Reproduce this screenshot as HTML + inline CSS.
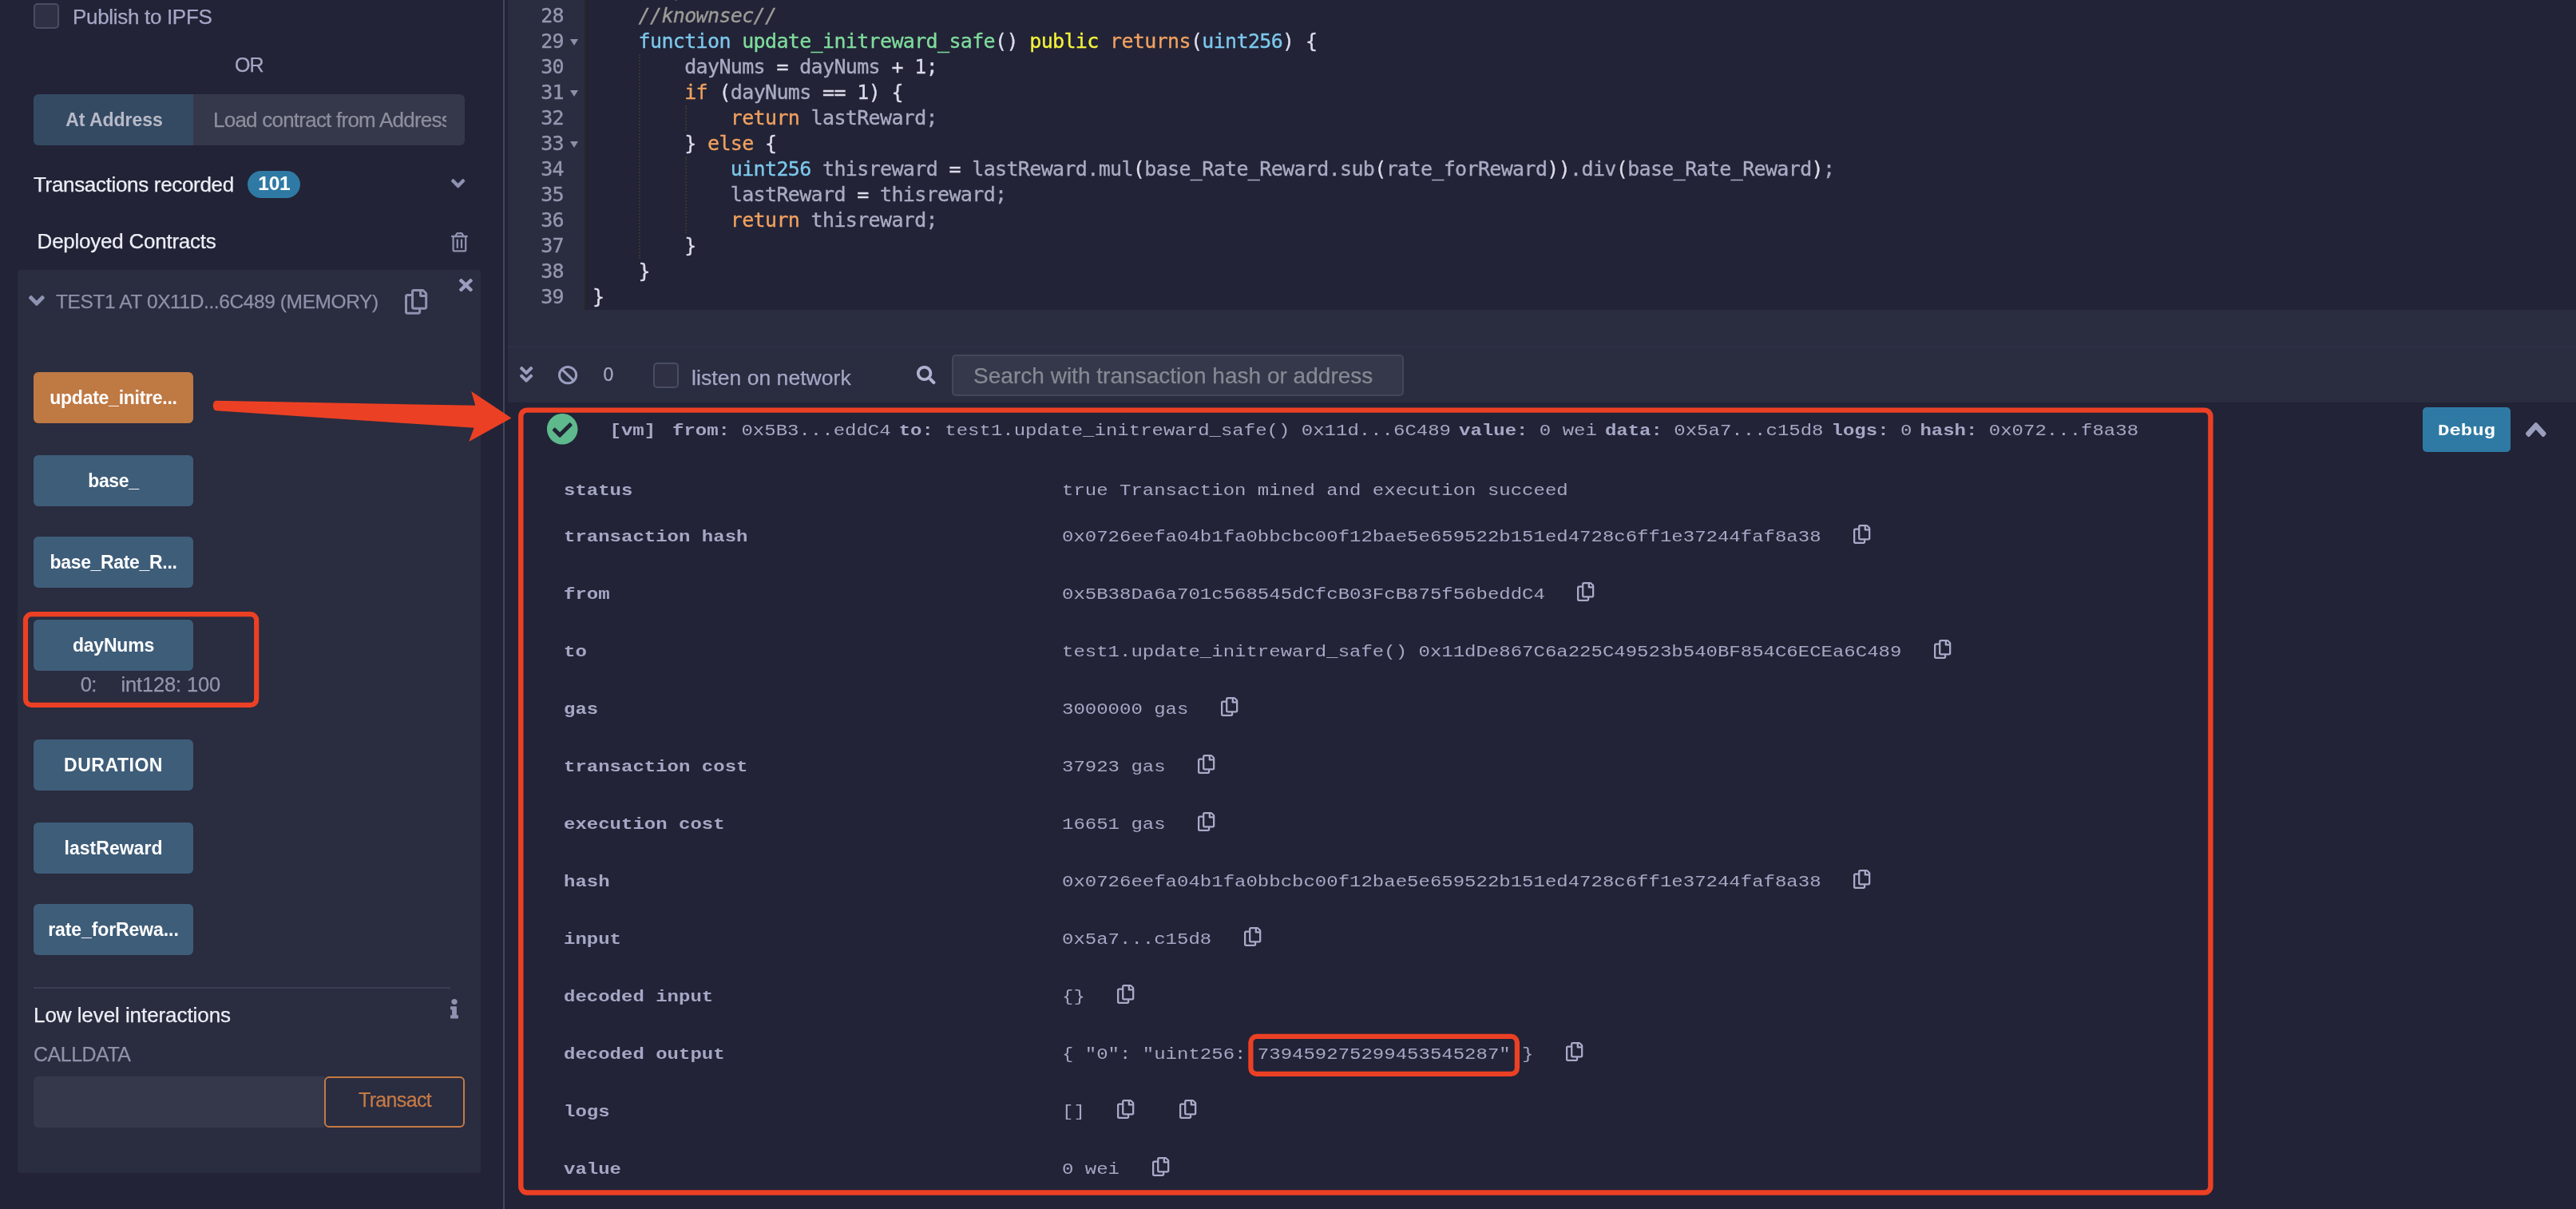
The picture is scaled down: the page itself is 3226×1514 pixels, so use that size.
<!DOCTYPE html>
<html lang="en">
<head>
<meta charset="utf-8">
<title>Remix - Ethereum IDE</title>
<style>
*{box-sizing:border-box;margin:0;padding:0}
html,body{width:3226px;height:1514px;overflow:hidden;background:#222336}
body{position:relative;font-family:"Liberation Sans",sans-serif;color:#a2a3bd}
.abs{position:absolute}
.t{position:absolute;white-space:pre;line-height:1;-webkit-text-stroke:0.25px}
/* sidebar */
#side{left:0;top:0;width:631px;height:1514px;background:#222336}
#vline{left:630px;top:0;width:2px;height:1514px;background:#43465d}
.btn{position:absolute;left:42px;width:200px;height:64px;border-radius:6px;background:#3e5d79;color:#fff;font-weight:bold;font-size:23px;text-align:center;line-height:64px;white-space:pre}
/* editor */
#editor{left:632px;top:0;width:2594px;height:388px;background:#222336}
#gutter{left:636px;top:0;width:96px;height:388px;background:#2a2c3f}
#gsep{left:732px;top:0;width:2px;height:388px;background:#26271f}
.ln{position:absolute;left:634px;width:72px;text-align:right;font:25px/32px "DejaVu Sans Mono","Liberation Mono",monospace;letter-spacing:-0.651px;-webkit-text-stroke:0.35px;color:#9597b0;white-space:pre}
.cl{position:absolute;left:742px;font:25px/32px "DejaVu Sans Mono","Liberation Mono",monospace;letter-spacing:-0.651px;-webkit-text-stroke:0.35px;color:#a9abc4;white-space:pre}
.fold{position:absolute;left:714px;width:0;height:0;border-left:5px solid transparent;border-right:5px solid transparent;border-top:8px solid #8d8fa6}
.k{color:#f0a060}.b{color:#7cc8ec}.g{color:#7fdc9c}.y{color:#f2f23a}.p{color:#dcdcea}.c{color:#9c9c98;font-style:italic}
.ig{position:absolute;width:0;border-left:2px dotted #38372f}
/* terminal */
#band{left:636px;top:388px;width:2590px;height:116px;background:#2a2c3f}
#bandline{left:636px;top:433px;width:2590px;height:3px;background:#2d3044}
#term{left:632px;top:504px;width:2594px;height:1010px;background:#222336}
.m{position:absolute;font:24px/32px "Liberation Mono",monospace;color:#a5a7c5;white-space:pre;transform:scaleY(.87);transform-origin:0 22.4px}
.m b{font-weight:bold}
.lbl{left:706px;font-weight:bold}
.val{left:1330px}
</style>
</head>
<body>
<div id="side" class="abs"></div>
<div id="editor" class="abs"></div>
<div id="gutter" class="abs"></div>
<div id="gsep" class="abs"></div>
<div id="band" class="abs"></div>
<div id="bandline" class="abs"></div>
<div id="term" class="abs"></div>
<div id="vline" class="abs"></div>
<div id="fg" style="position:absolute;left:0;top:0;width:3226px;height:1514px;will-change:transform">
<div class="abs" style="left:42px;top:4px;width:32px;height:32px;border:2px solid #4a4c63;border-radius:5px;background:#2f3044"></div>
<div class="t" style="left:91.0px;top:8.2px;font-size:26px;color:#a5a7c6;letter-spacing:-0.313px;">Publish to IPFS</div>
<div class="t" style="left:294.0px;top:68.9px;font-size:25px;color:#a5a7c6;letter-spacing:-1.000px;">OR</div>
<div class="abs" style="left:42px;top:118px;width:200px;height:64px;border-radius:6px 0 0 6px;background:#344a63"></div>
<div class="t" style="left:82.2px;top:138.8px;font-size:23px;color:#b9bac8;font-weight:bold;-webkit-text-stroke:0;letter-spacing:-0.024px;">At Address</div>
<div class="abs" style="left:242px;top:118px;width:340px;height:64px;border-radius:0 6px 6px 0;background:#35374a"></div>
<div class="abs" style="left:242px;top:118px;width:317px;height:64px;overflow:hidden"><div class="t" style="left:25.0px;top:19.3px;font-size:26px;color:#8d8f9d;letter-spacing:-0.767px;">Load contract from Address</div></div>
<div class="t" style="left:42.0px;top:218.3px;font-size:26px;color:#eceef6;letter-spacing:-0.330px;">Transactions recorded</div>
<div class="abs" style="left:310px;top:213.8px;width:66px;height:34.4px;border-radius:18px;background:#2f7aa4"></div>
<div class="t" style="left:323.3px;top:218.0px;font-size:24.5px;color:#ffffff;font-weight:bold;-webkit-text-stroke:0;letter-spacing:-0.293px;">101</div>
<svg class="abs" style="left:564.7px;top:223.7px;overflow:visible" width="17.3" height="11.4" viewBox="0 56.75 320 206.6" preserveAspectRatio="none"><path fill="#8f92b0" d="M143 256.3L7 120.3c-9.4-9.4-9.4-24.6 0-33.9l22.6-22.6c9.4-9.4 24.6-9.4 33.9 0l96.4 96.4 96.4-96.4c9.4-9.4 24.6-9.4 33.9 0L313 86.3c9.4 9.4 9.4 24.6 0 33.9l-136 136c-9.4 9.5-24.6 9.5-34 .1z"/></svg>
<div class="t" style="left:46.6px;top:289.0px;font-size:26px;color:#eceef6;letter-spacing:-0.241px;">Deployed Contracts</div>
<svg class="abs" style="left:565.2px;top:291.0px;overflow:visible" width="20.8" height="24.5" viewBox="0 -0.0 448 512" preserveAspectRatio="none"><path fill="#8f92b0" d="M268 416h24a12 12 0 0 0 12-12V188a12 12 0 0 0-12-12h-24a12 12 0 0 0-12 12v216a12 12 0 0 0 12 12zM432 80h-82.41l-34-56.7A48 48 0 0 0 274.41 0H173.59a48 48 0 0 0-41.16 23.3L98.41 80H16A16 16 0 0 0 0 96v16a16 16 0 0 0 16 16h16v336a48 48 0 0 0 48 48h288a48 48 0 0 0 48-48V128h16a16 16 0 0 0 16-16V96a16 16 0 0 0-16-16zM171.84 50.91A6 6 0 0 1 177 48h94a6 6 0 0 1 5.15 2.91L293.61 80H154.39zM368 464H80V128h288zm-212-48h24a12 12 0 0 0 12-12V188a12 12 0 0 0-12-12h-24a12 12 0 0 0-12 12v216a12 12 0 0 0 12 12z"/></svg>
<div class="abs" style="left:22px;top:337.5px;width:580px;height:1131.5px;border-radius:4px;background:#2a2c3f"></div>
<svg class="abs" style="left:574.7px;top:348.8px;overflow:visible" width="16.9" height="16.2" viewBox="0 80 352 352" preserveAspectRatio="none"><path fill="#9a9dbd" d="M242.72 256l100.07-100.07c12.28-12.28 12.28-32.19 0-44.48l-22.24-22.24c-12.28-12.28-32.19-12.28-44.48 0L176 189.28 75.93 89.21c-12.28-12.28-32.19-12.28-44.48 0L9.21 111.45c-12.28 12.28-12.28 32.19 0 44.48L109.28 256 9.21 356.07c-12.28 12.28-12.28 32.19 0 44.48l22.24 22.24c12.28 12.28 32.2 12.28 44.48 0L176 322.72l100.07 100.07c12.28 12.28 32.2 12.28 44.48 0l22.24-22.24c12.28-12.28 12.28-32.19 0-44.48L242.72 256z"/></svg>
<svg class="abs" style="left:36.4px;top:370.0px;overflow:visible" width="19.8" height="13.0" viewBox="0 56.75 320 206.6" preserveAspectRatio="none"><path fill="#8f92b0" d="M143 256.3L7 120.3c-9.4-9.4-9.4-24.6 0-33.9l22.6-22.6c9.4-9.4 24.6-9.4 33.9 0l96.4 96.4 96.4-96.4c9.4-9.4 24.6-9.4 33.9 0L313 86.3c9.4 9.4 9.4 24.6 0 33.9l-136 136c-9.4 9.5-24.6 9.5-34 .1z"/></svg>
<div class="t" style="left:70.0px;top:366.0px;font-size:24.5px;color:#8f91a9;letter-spacing:-0.400px;">TEST1 AT 0X11D...6C489 (MEMORY)</div>
<svg class="abs" style="left:506.8px;top:362.0px;overflow:visible" width="28.2" height="31.7" viewBox="0 0 448 512" preserveAspectRatio="none"><path fill="#8f92b0" d="M433.941 65.941l-51.882-51.882A48 48 0 0 0 348.118 0H176c-26.51 0-48 21.49-48 48v48H48c-26.51 0-48 21.49-48 48v320c0 26.51 21.49 48 48 48h224c26.51 0 48-21.49 48-48v-48h80c26.51 0 48-21.49 48-48V99.882a48 48 0 0 0-14.059-33.941zM266 464H54a6 6 0 0 1-6-6V150a6 6 0 0 1 6-6h74v224c0 26.51 21.49 48 48 48h96v42a6 6 0 0 1-6 6zm128-96H182a6 6 0 0 1-6-6V54a6 6 0 0 1 6-6h106v88c0 13.255 10.745 24 24 24h88v202a6 6 0 0 1-6 6zm6-256h-64V48h9.632c1.591 0 3.117.632 4.243 1.757l48.368 48.368a6 6 0 0 1 1.757 4.243V112z"/></svg>
<div class="abs" style="left:42px;top:466px;width:200px;height:64px;border-radius:6px;background:#bf7943"></div>
<div class="t" style="left:62.3px;top:487.1px;font-size:23px;color:#ffffff;font-weight:bold;-webkit-text-stroke:0;letter-spacing:-0.262px;">update_initre...</div>
<div class="abs" style="left:42px;top:570px;width:200px;height:64px;border-radius:6px;background:#3e5d79"></div>
<div class="t" style="left:110.2px;top:591.1px;font-size:23px;color:#ffffff;font-weight:bold;-webkit-text-stroke:0;letter-spacing:-0.344px;">base_</div>
<div class="abs" style="left:42px;top:672px;width:200px;height:64px;border-radius:6px;background:#3e5d79"></div>
<div class="t" style="left:62.5px;top:693.1px;font-size:23px;color:#ffffff;font-weight:bold;-webkit-text-stroke:0;letter-spacing:-0.332px;">base_Rate_R...</div>
<div class="abs" style="left:42px;top:776px;width:200px;height:64px;border-radius:6px;background:#3e5d79"></div>
<div class="t" style="left:90.9px;top:797.1px;font-size:23px;color:#ffffff;font-weight:bold;-webkit-text-stroke:0;letter-spacing:-0.191px;">dayNums</div>
<div class="abs" style="left:42px;top:926px;width:200px;height:64px;border-radius:6px;background:#3e5d79"></div>
<div class="t" style="left:80.0px;top:947.1px;font-size:23px;color:#ffffff;font-weight:bold;-webkit-text-stroke:0;letter-spacing:0.541px;">DURATION</div>
<div class="abs" style="left:42px;top:1030px;width:200px;height:64px;border-radius:6px;background:#3e5d79"></div>
<div class="t" style="left:80.5px;top:1051.1px;font-size:23px;color:#ffffff;font-weight:bold;-webkit-text-stroke:0;letter-spacing:0.028px;">lastReward</div>
<div class="abs" style="left:42px;top:1132px;width:200px;height:64px;border-radius:6px;background:#3e5d79"></div>
<div class="t" style="left:60.2px;top:1153.1px;font-size:23px;color:#ffffff;font-weight:bold;-webkit-text-stroke:0;letter-spacing:-0.093px;">rate_forRewa...</div>
<div class="t" style="left:100.7px;top:845.3px;font-size:25.5px;color:#9496ae;letter-spacing:-0.633px;">0:</div>
<div class="t" style="left:151.4px;top:845.3px;font-size:25.5px;color:#9496ae;letter-spacing:-0.145px;">int128: 100</div>
<div class="abs" style="left:42px;top:1236px;width:522px;height:2px;background:#3c3e54"></div>
<div class="t" style="left:42.0px;top:1258.3px;font-size:26px;color:#eceef6;letter-spacing:-0.072px;">Low level interactions</div>
<svg class="abs" style="left:564.0px;top:1250.5px;overflow:visible" width="10.0" height="24.5" viewBox="0 0 192 512" preserveAspectRatio="none"><path fill="#8f92b0" d="M20 424.229h20V279.771H20c-11.046 0-20-8.954-20-20V212c0-11.046 8.954-20 20-20h112c11.046 0 20 8.954 20 20v212.229h20c11.046 0 20 8.954 20 20V492c0 11.046-8.954 20-20 20H20c-11.046 0-20-8.954-20-20v-47.771c0-11.046 8.954-20 20-20zM96 0C56.235 0 24 32.235 24 72s32.235 72 72 72 72-32.235 72-72S135.764 0 96 0z"/></svg>
<div class="t" style="left:42.0px;top:1307.6px;font-size:25px;color:#8f91a9;letter-spacing:-0.501px;">CALLDATA</div>
<div class="abs" style="left:42px;top:1348px;width:364px;height:64px;border-radius:6px 0 0 6px;background:#35374a"></div>
<div class="abs" style="left:406px;top:1348px;width:176px;height:64px;border-radius:6px;border:2px solid #c47a45"></div>
<div class="t" style="left:449.0px;top:1365.3px;font-size:25px;color:#c47a45;letter-spacing:-0.666px;">Transact</div>

<div class="ln" style="top:4px">28</div>
<div class="cl" style="top:4px"><span class="c">    //knownsec//</span></div>
<div class="ln" style="top:36px">29</div>
<div class="fold" style="top:49px"></div>
<div class="cl" style="top:36px">    <span class="b">function</span> <span class="g">update_initreward_safe</span><span class="p">()</span> <span class="y">public</span> <span class="k">returns</span><span class="p">(</span><span class="b">uint256</span><span class="p">)</span> <span class="p">{</span></div>
<div class="ln" style="top:68px">30</div>
<div class="cl" style="top:68px">        dayNums <span class="p">=</span> dayNums <span class="p">+</span> <span class="p">1;</span></div>
<div class="ln" style="top:100px">31</div>
<div class="fold" style="top:113px"></div>
<div class="cl" style="top:100px">        <span class="k">if</span> <span class="p">(</span>dayNums <span class="p">==</span> <span class="p">1)</span> <span class="p">{</span></div>
<div class="ln" style="top:132px">32</div>
<div class="cl" style="top:132px">            <span class="k">return</span> lastReward;</div>
<div class="ln" style="top:164px">33</div>
<div class="fold" style="top:177px"></div>
<div class="cl" style="top:164px">        <span class="p">}</span> <span class="k">else</span> <span class="p">{</span></div>
<div class="ln" style="top:196px">34</div>
<div class="cl" style="top:196px">            <span class="b">uint256</span> thisreward <span class="p">=</span> lastReward.mul<span class="p">(</span>base_Rate_Reward.sub<span class="p">(</span>rate_forReward<span class="p">))</span>.div<span class="p">(</span>base_Rate_Reward<span class="p">)</span>;</div>
<div class="ln" style="top:228px">35</div>
<div class="cl" style="top:228px">            lastReward <span class="p">=</span> thisreward;</div>
<div class="ln" style="top:260px">36</div>
<div class="cl" style="top:260px">            <span class="k">return</span> thisreward;</div>
<div class="ln" style="top:292px">37</div>
<div class="cl" style="top:292px">        <span class="p">}</span></div>
<div class="ln" style="top:324px">38</div>
<div class="cl" style="top:324px">    <span class="p">}</span></div>
<div class="ln" style="top:356px">39</div>
<div class="cl" style="top:356px"><span class="p">}</span></div>
<div class="cl" style="top:-28px">       <span class="p">}</span></div>
<div class="ig" style="left:800px;top:68px;height:256px"></div>
<div class="ig" style="left:858px;top:132px;height:32px"></div>
<div class="ig" style="left:858px;top:196px;height:96px"></div>

<svg class="abs" style="left:651.1px;top:459.1px;overflow:visible" width="16.3" height="19.8" viewBox="-0.05 56.75 320.1 398.59" preserveAspectRatio="none"><path fill="#9a9dbd" d="M143 256.3L7 120.3c-9.4-9.4-9.4-24.6 0-33.900l22.600-22.600c9.400-9.400 24.600-9.400 33.900 0l96.400 96.400 96.400-96.400c9.400-9.400 24.600-9.400 33.900 0L313 86.300c9.400 9.400 9.400 24.600 0 33.900l-136 136c-9.400 9.500-24.600 9.500-34 .1zm34 192l136-136c9.400-9.400 9.400-24.600 0-33.900l-22.600-22.600c-9.400-9.400-24.600-9.400-33.900 0L160 352.100l-96.400-96.400c-9.400-9.400-24.600-9.400-33.900 0L7 278.300c-9.400 9.400-9.400 24.600 0 33.900l136 136c9.400 9.500 24.600 9.500 34 .1z"/></svg>
<svg class="abs" style="left:698.9px;top:457.5px;overflow:visible" width="24.2" height="23.3" viewBox="8 8 496 496" preserveAspectRatio="none"><path fill="#9a9dbd" d="M256 8C119.034 8 8 119.033 8 256s111.034 248 248 248 248-111.034 248-248S392.967 8 256 8zm130.108 117.892c65.448 65.448 70 165.481 20.677 235.637L150.47 105.216c70.204-49.356 170.226-44.735 235.638 20.676zM125.892 386.108c-65.448-65.448-70-165.481-20.677-235.637L361.53 406.784c-70.203 49.356-170.226 44.736-235.638-20.676z"/></svg>
<div class="t" style="left:755.5px;top:458.4px;font-size:23px;color:#a5a7c6;letter-spacing:0.008px;">0</div>
<div class="abs" style="left:818.4px;top:454px;width:32px;height:32px;border:2px solid #4a4c63;border-radius:5px;background:#2f3044"></div>
<div class="t" style="left:866.1px;top:459.5px;font-size:26.5px;color:#a5a7c6;letter-spacing:0.044px;">listen on network</div>
<svg class="abs" style="left:1148.0px;top:457.5px;overflow:visible" width="23.7" height="23.3" viewBox="0 0 511.96 512.05" preserveAspectRatio="none"><path fill="#b0b3d0" d="M505 442.7L405.3 343c-4.5-4.5-10.6-7-17-7H372c27.6-35.3 44-79.7 44-128C416 93.1 322.9 0 208 0S0 93.1 0 208s93.1 208 208 208c48.3 0 92.7-16.4 128-44v16.3c0 6.4 2.5 12.5 7 17l99.7 99.7c9.4 9.4 24.6 9.4 33.9 0l28.3-28.3c9.4-9.4 9.4-24.6.1-34zM208 336c-70.7 0-128-57.2-128-128 0-70.7 57.2-128 128-128 70.7 0 128 57.2 128 128 0 70.7-57.2 128-128 128z"/></svg>
<div class="abs" style="left:1192px;top:444px;width:566px;height:52px;border:2px solid #44465a;border-radius:5px;background:#35374a"></div>
<div class="t" style="left:1219.0px;top:456.5px;font-size:28px;color:#858a93;letter-spacing:0.020px;">Search with transaction hash or address</div>

<svg class="abs" style="left:684.8px;top:517.6px;overflow:visible" width="38.5" height="38.6" viewBox="8 8 496 496" preserveAspectRatio="none"><path fill="#5eb98d" d="M504 256c0 136.967-111.033 248-248 248S8 392.967 8 256 119.033 8 256 8s248 111.033 248 248zM227.314 387.314l184-184c6.248-6.248 6.248-16.379 0-22.627l-22.627-22.627c-6.248-6.249-16.379-6.249-22.628 0L216 308.118l-70.059-70.059c-6.248-6.248-16.379-6.248-22.628 0l-22.627 22.627c-6.248 6.248-6.248 16.379 0 22.627l104 104c6.249 6.249 16.379 6.249 22.628.001z"/></svg>
<div class="m" style="left:763.5px;top:523.2px;font-weight:bold">[vm]</div>
<div class="m" style="left:842px;top:523.2px"><b>from:</b> 0x5B3...eddC4<span style="letter-spacing:-4.4px"> </span><b>to:</b> test1.update_initreward_safe() 0x11d...6C489<span style="letter-spacing:-4.4px"> </span><b>value:</b> 0 wei<span style="letter-spacing:-4.4px"> </span><b>data</b><b>:</b> 0x5a7...c15d8<span style="letter-spacing:-4.4px"> </span><b>logs:</b> 0<span style="letter-spacing:-4.4px"> </span><b>hash:</b> 0x072...f8a38</div>
<div class="abs" style="left:3034px;top:510px;width:110px;height:56px;border-radius:5px;background:#2f7aa4"></div>
<div class="m" style="left:3053px;top:523.2px;font-weight:bold;color:#fff">Debug</div>
<svg class="abs" style="left:3163.0px;top:529.0px;overflow:visible" width="25.6" height="18.0" viewBox="0 56.75 320 206.6" preserveAspectRatio="none"><path fill="#9a9dbd" d="M143 256.3L7 120.3c-9.4-9.4-9.4-24.6 0-33.9l22.6-22.6c9.4-9.4 24.6-9.4 33.9 0l96.4 96.4 96.4-96.4c9.4-9.4 24.6-9.4 33.9 0L313 86.3c9.4 9.4 9.4 24.6 0 33.9l-136 136c-9.4 9.5-24.6 9.5-34 .1z" transform="translate(0,320.10) scale(1,-1)"/></svg>
<div class="m lbl" style="top:598.0px">status</div>
<div class="m val" style="top:598.0px">true Transaction mined and execution succeed</div>
<div class="m lbl" style="top:655.8px">transaction hash</div>
<div class="m val" style="top:655.8px">0x0726eefa04b1fa0bbcbc00f12bae5e659522b151ed4728c6ff1e37244faf8a38</div>
<svg class="abs" style="left:2320.9px;top:656.9px;overflow:visible" width="21.3" height="24.1" viewBox="0 0 448 512" preserveAspectRatio="none"><path fill="#a9abc9" d="M433.941 65.941l-51.882-51.882A48 48 0 0 0 348.118 0H176c-26.51 0-48 21.49-48 48v48H48c-26.51 0-48 21.49-48 48v320c0 26.51 21.49 48 48 48h224c26.51 0 48-21.49 48-48v-48h80c26.51 0 48-21.49 48-48V99.882a48 48 0 0 0-14.059-33.941zM266 464H54a6 6 0 0 1-6-6V150a6 6 0 0 1 6-6h74v224c0 26.51 21.49 48 48 48h96v42a6 6 0 0 1-6 6zm128-96H182a6 6 0 0 1-6-6V54a6 6 0 0 1 6-6h106v88c0 13.255 10.745 24 24 24h88v202a6 6 0 0 1-6 6zm6-256h-64V48h9.632c1.591 0 3.117.632 4.243 1.757l48.368 48.368a6 6 0 0 1 1.757 4.243V112z"/></svg>
<div class="m lbl" style="top:727.8px">from</div>
<div class="m val" style="top:727.8px">0x5B38Da6a701c568545dCfcB03FcB875f56beddC4</div>
<svg class="abs" style="left:1975.3px;top:728.9px;overflow:visible" width="21.3" height="24.1" viewBox="0 0 448 512" preserveAspectRatio="none"><path fill="#a9abc9" d="M433.941 65.941l-51.882-51.882A48 48 0 0 0 348.118 0H176c-26.51 0-48 21.49-48 48v48H48c-26.51 0-48 21.49-48 48v320c0 26.51 21.49 48 48 48h224c26.51 0 48-21.49 48-48v-48h80c26.51 0 48-21.49 48-48V99.882a48 48 0 0 0-14.059-33.941zM266 464H54a6 6 0 0 1-6-6V150a6 6 0 0 1 6-6h74v224c0 26.51 21.49 48 48 48h96v42a6 6 0 0 1-6 6zm128-96H182a6 6 0 0 1-6-6V54a6 6 0 0 1 6-6h106v88c0 13.255 10.745 24 24 24h88v202a6 6 0 0 1-6 6zm6-256h-64V48h9.632c1.591 0 3.117.632 4.243 1.757l48.368 48.368a6 6 0 0 1 1.757 4.243V112z"/></svg>
<div class="m lbl" style="top:799.8px">to</div>
<div class="m val" style="top:799.8px">test1.update_initreward_safe() 0x11dDe867C6a225C49523b540BF854C6ECEa6C489</div>
<svg class="abs" style="left:2421.7px;top:800.9px;overflow:visible" width="21.3" height="24.1" viewBox="0 0 448 512" preserveAspectRatio="none"><path fill="#a9abc9" d="M433.941 65.941l-51.882-51.882A48 48 0 0 0 348.118 0H176c-26.51 0-48 21.49-48 48v48H48c-26.51 0-48 21.49-48 48v320c0 26.51 21.49 48 48 48h224c26.51 0 48-21.49 48-48v-48h80c26.51 0 48-21.49 48-48V99.882a48 48 0 0 0-14.059-33.941zM266 464H54a6 6 0 0 1-6-6V150a6 6 0 0 1 6-6h74v224c0 26.51 21.49 48 48 48h96v42a6 6 0 0 1-6 6zm128-96H182a6 6 0 0 1-6-6V54a6 6 0 0 1 6-6h106v88c0 13.255 10.745 24 24 24h88v202a6 6 0 0 1-6 6zm6-256h-64V48h9.632c1.591 0 3.117.632 4.243 1.757l48.368 48.368a6 6 0 0 1 1.757 4.243V112z"/></svg>
<div class="m lbl" style="top:871.8px">gas</div>
<div class="m val" style="top:871.8px">3000000 gas</div>
<svg class="abs" style="left:1528.9px;top:872.9px;overflow:visible" width="21.3" height="24.1" viewBox="0 0 448 512" preserveAspectRatio="none"><path fill="#a9abc9" d="M433.941 65.941l-51.882-51.882A48 48 0 0 0 348.118 0H176c-26.51 0-48 21.49-48 48v48H48c-26.51 0-48 21.49-48 48v320c0 26.51 21.49 48 48 48h224c26.51 0 48-21.49 48-48v-48h80c26.51 0 48-21.49 48-48V99.882a48 48 0 0 0-14.059-33.941zM266 464H54a6 6 0 0 1-6-6V150a6 6 0 0 1 6-6h74v224c0 26.51 21.49 48 48 48h96v42a6 6 0 0 1-6 6zm128-96H182a6 6 0 0 1-6-6V54a6 6 0 0 1 6-6h106v88c0 13.255 10.745 24 24 24h88v202a6 6 0 0 1-6 6zm6-256h-64V48h9.632c1.591 0 3.117.632 4.243 1.757l48.368 48.368a6 6 0 0 1 1.757 4.243V112z"/></svg>
<div class="m lbl" style="top:943.8px">transaction cost</div>
<div class="m val" style="top:943.8px">37923 gas</div>
<svg class="abs" style="left:1500.1px;top:944.9px;overflow:visible" width="21.3" height="24.1" viewBox="0 0 448 512" preserveAspectRatio="none"><path fill="#a9abc9" d="M433.941 65.941l-51.882-51.882A48 48 0 0 0 348.118 0H176c-26.51 0-48 21.49-48 48v48H48c-26.51 0-48 21.49-48 48v320c0 26.51 21.49 48 48 48h224c26.51 0 48-21.49 48-48v-48h80c26.51 0 48-21.49 48-48V99.882a48 48 0 0 0-14.059-33.941zM266 464H54a6 6 0 0 1-6-6V150a6 6 0 0 1 6-6h74v224c0 26.51 21.49 48 48 48h96v42a6 6 0 0 1-6 6zm128-96H182a6 6 0 0 1-6-6V54a6 6 0 0 1 6-6h106v88c0 13.255 10.745 24 24 24h88v202a6 6 0 0 1-6 6zm6-256h-64V48h9.632c1.591 0 3.117.632 4.243 1.757l48.368 48.368a6 6 0 0 1 1.757 4.243V112z"/></svg>
<div class="m lbl" style="top:1015.8px">execution cost</div>
<div class="m val" style="top:1015.8px">16651 gas</div>
<svg class="abs" style="left:1500.1px;top:1016.9px;overflow:visible" width="21.3" height="24.1" viewBox="0 0 448 512" preserveAspectRatio="none"><path fill="#a9abc9" d="M433.941 65.941l-51.882-51.882A48 48 0 0 0 348.118 0H176c-26.51 0-48 21.49-48 48v48H48c-26.51 0-48 21.49-48 48v320c0 26.51 21.49 48 48 48h224c26.51 0 48-21.49 48-48v-48h80c26.51 0 48-21.49 48-48V99.882a48 48 0 0 0-14.059-33.941zM266 464H54a6 6 0 0 1-6-6V150a6 6 0 0 1 6-6h74v224c0 26.51 21.49 48 48 48h96v42a6 6 0 0 1-6 6zm128-96H182a6 6 0 0 1-6-6V54a6 6 0 0 1 6-6h106v88c0 13.255 10.745 24 24 24h88v202a6 6 0 0 1-6 6zm6-256h-64V48h9.632c1.591 0 3.117.632 4.243 1.757l48.368 48.368a6 6 0 0 1 1.757 4.243V112z"/></svg>
<div class="m lbl" style="top:1087.8px">hash</div>
<div class="m val" style="top:1087.8px">0x0726eefa04b1fa0bbcbc00f12bae5e659522b151ed4728c6ff1e37244faf8a38</div>
<svg class="abs" style="left:2320.9px;top:1088.9px;overflow:visible" width="21.3" height="24.1" viewBox="0 0 448 512" preserveAspectRatio="none"><path fill="#a9abc9" d="M433.941 65.941l-51.882-51.882A48 48 0 0 0 348.118 0H176c-26.51 0-48 21.49-48 48v48H48c-26.51 0-48 21.49-48 48v320c0 26.51 21.49 48 48 48h224c26.51 0 48-21.49 48-48v-48h80c26.51 0 48-21.49 48-48V99.882a48 48 0 0 0-14.059-33.941zM266 464H54a6 6 0 0 1-6-6V150a6 6 0 0 1 6-6h74v224c0 26.51 21.49 48 48 48h96v42a6 6 0 0 1-6 6zm128-96H182a6 6 0 0 1-6-6V54a6 6 0 0 1 6-6h106v88c0 13.255 10.745 24 24 24h88v202a6 6 0 0 1-6 6zm6-256h-64V48h9.632c1.591 0 3.117.632 4.243 1.757l48.368 48.368a6 6 0 0 1 1.757 4.243V112z"/></svg>
<div class="m lbl" style="top:1159.8px">input</div>
<div class="m val" style="top:1159.8px">0x5a7...c15d8</div>
<svg class="abs" style="left:1557.7px;top:1160.9px;overflow:visible" width="21.3" height="24.1" viewBox="0 0 448 512" preserveAspectRatio="none"><path fill="#a9abc9" d="M433.941 65.941l-51.882-51.882A48 48 0 0 0 348.118 0H176c-26.51 0-48 21.49-48 48v48H48c-26.51 0-48 21.49-48 48v320c0 26.51 21.49 48 48 48h224c26.51 0 48-21.49 48-48v-48h80c26.51 0 48-21.49 48-48V99.882a48 48 0 0 0-14.059-33.941zM266 464H54a6 6 0 0 1-6-6V150a6 6 0 0 1 6-6h74v224c0 26.51 21.49 48 48 48h96v42a6 6 0 0 1-6 6zm128-96H182a6 6 0 0 1-6-6V54a6 6 0 0 1 6-6h106v88c0 13.255 10.745 24 24 24h88v202a6 6 0 0 1-6 6zm6-256h-64V48h9.632c1.591 0 3.117.632 4.243 1.757l48.368 48.368a6 6 0 0 1 1.757 4.243V112z"/></svg>
<div class="m lbl" style="top:1231.8px">decoded input</div>
<div class="m val" style="top:1231.8px">{}</div>
<svg class="abs" style="left:1399.3px;top:1232.9px;overflow:visible" width="21.3" height="24.1" viewBox="0 0 448 512" preserveAspectRatio="none"><path fill="#a9abc9" d="M433.941 65.941l-51.882-51.882A48 48 0 0 0 348.118 0H176c-26.51 0-48 21.49-48 48v48H48c-26.51 0-48 21.49-48 48v320c0 26.51 21.49 48 48 48h224c26.51 0 48-21.49 48-48v-48h80c26.51 0 48-21.49 48-48V99.882a48 48 0 0 0-14.059-33.941zM266 464H54a6 6 0 0 1-6-6V150a6 6 0 0 1 6-6h74v224c0 26.51 21.49 48 48 48h96v42a6 6 0 0 1-6 6zm128-96H182a6 6 0 0 1-6-6V54a6 6 0 0 1 6-6h106v88c0 13.255 10.745 24 24 24h88v202a6 6 0 0 1-6 6zm6-256h-64V48h9.632c1.591 0 3.117.632 4.243 1.757l48.368 48.368a6 6 0 0 1 1.757 4.243V112z"/></svg>
<div class="m lbl" style="top:1303.8px">decoded output</div>
<div class="m val" style="top:1303.8px">{ "0": "uint256: 739459275299453545287" }</div>
<svg class="abs" style="left:1960.9px;top:1304.9px;overflow:visible" width="21.3" height="24.1" viewBox="0 0 448 512" preserveAspectRatio="none"><path fill="#a9abc9" d="M433.941 65.941l-51.882-51.882A48 48 0 0 0 348.118 0H176c-26.51 0-48 21.49-48 48v48H48c-26.51 0-48 21.49-48 48v320c0 26.51 21.49 48 48 48h224c26.51 0 48-21.49 48-48v-48h80c26.51 0 48-21.49 48-48V99.882a48 48 0 0 0-14.059-33.941zM266 464H54a6 6 0 0 1-6-6V150a6 6 0 0 1 6-6h74v224c0 26.51 21.49 48 48 48h96v42a6 6 0 0 1-6 6zm128-96H182a6 6 0 0 1-6-6V54a6 6 0 0 1 6-6h106v88c0 13.255 10.745 24 24 24h88v202a6 6 0 0 1-6 6zm6-256h-64V48h9.632c1.591 0 3.117.632 4.243 1.757l48.368 48.368a6 6 0 0 1 1.757 4.243V112z"/></svg>
<div class="m lbl" style="top:1375.8px">logs</div>
<div class="m val" style="top:1375.8px">[]</div>
<svg class="abs" style="left:1399.3px;top:1376.9px;overflow:visible" width="21.3" height="24.1" viewBox="0 0 448 512" preserveAspectRatio="none"><path fill="#a9abc9" d="M433.941 65.941l-51.882-51.882A48 48 0 0 0 348.118 0H176c-26.51 0-48 21.49-48 48v48H48c-26.51 0-48 21.49-48 48v320c0 26.51 21.49 48 48 48h224c26.51 0 48-21.49 48-48v-48h80c26.51 0 48-21.49 48-48V99.882a48 48 0 0 0-14.059-33.941zM266 464H54a6 6 0 0 1-6-6V150a6 6 0 0 1 6-6h74v224c0 26.51 21.49 48 48 48h96v42a6 6 0 0 1-6 6zm128-96H182a6 6 0 0 1-6-6V54a6 6 0 0 1 6-6h106v88c0 13.255 10.745 24 24 24h88v202a6 6 0 0 1-6 6zm6-256h-64V48h9.632c1.591 0 3.117.632 4.243 1.757l48.368 48.368a6 6 0 0 1 1.757 4.243V112z"/></svg>
<svg class="abs" style="left:1477.1px;top:1376.9px;overflow:visible" width="21.3" height="24.1" viewBox="0 0 448 512" preserveAspectRatio="none"><path fill="#a9abc9" d="M433.941 65.941l-51.882-51.882A48 48 0 0 0 348.118 0H176c-26.51 0-48 21.49-48 48v48H48c-26.51 0-48 21.49-48 48v320c0 26.51 21.49 48 48 48h224c26.51 0 48-21.49 48-48v-48h80c26.51 0 48-21.49 48-48V99.882a48 48 0 0 0-14.059-33.941zM266 464H54a6 6 0 0 1-6-6V150a6 6 0 0 1 6-6h74v224c0 26.51 21.49 48 48 48h96v42a6 6 0 0 1-6 6zm128-96H182a6 6 0 0 1-6-6V54a6 6 0 0 1 6-6h106v88c0 13.255 10.745 24 24 24h88v202a6 6 0 0 1-6 6zm6-256h-64V48h9.632c1.591 0 3.117.632 4.243 1.757l48.368 48.368a6 6 0 0 1 1.757 4.243V112z"/></svg>
<div class="m lbl" style="top:1447.8px">value</div>
<div class="m val" style="top:1447.8px">0 wei</div>
<svg class="abs" style="left:1442.5px;top:1448.9px;overflow:visible" width="21.3" height="24.1" viewBox="0 0 448 512" preserveAspectRatio="none"><path fill="#a9abc9" d="M433.941 65.941l-51.882-51.882A48 48 0 0 0 348.118 0H176c-26.51 0-48 21.49-48 48v48H48c-26.51 0-48 21.49-48 48v320c0 26.51 21.49 48 48 48h224c26.51 0 48-21.49 48-48v-48h80c26.51 0 48-21.49 48-48V99.882a48 48 0 0 0-14.059-33.941zM266 464H54a6 6 0 0 1-6-6V150a6 6 0 0 1 6-6h74v224c0 26.51 21.49 48 48 48h96v42a6 6 0 0 1-6 6zm128-96H182a6 6 0 0 1-6-6V54a6 6 0 0 1 6-6h106v88c0 13.255 10.745 24 24 24h88v202a6 6 0 0 1-6 6zm6-256h-64V48h9.632c1.591 0 3.117.632 4.243 1.757l48.368 48.368a6 6 0 0 1 1.757 4.243V112z"/></svg>

<svg class="abs" style="left:0;top:0" width="3226" height="1514" viewBox="0 0 3226 1514">
<rect x="652.30" y="513.60" width="2116.10" height="979.90" rx="7.80" ry="7.80" fill="none" stroke="#ec4024" stroke-width="6.4"/>
<rect x="32.00" y="769.20" width="289.20" height="113.70" rx="7.40" ry="7.40" fill="none" stroke="#ec4024" stroke-width="6.2"/>
<rect x="1566.40" y="1297.90" width="333.50" height="47.00" rx="7.40" ry="7.40" fill="none" stroke="#ec4024" stroke-width="6.2"/>
<path d="M270.5 501.8 L595.3 507.8 L590.2 489.9 L640.5 523.5 L587.3 553.1 L593.6 535.7 L270.5 514.3 A3.7 6.25 0 0 1 270.5 501.8 Z" fill="#ec4024"/>
</svg>

</div>
</body>
</html>
